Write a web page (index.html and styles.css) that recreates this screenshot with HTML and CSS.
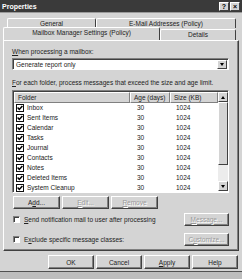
FILE: index.html
```html
<!DOCTYPE html>
<html>
<head>
    <meta charset="UTF-8">
    <title>Properties</title>
    <link rel="stylesheet" href="styles.css">
</head>
<body>
    <div class="window">
        <div class="titlebar">
            <span class="title">Properties</span>
            <span class="caption-btns">
                <span class="cap-btn">?</span>
                <span class="cap-btn">&#215;</span>
            </span>
        </div>
        <div class="client">
            <div class="tabs">
                <div class="tab-row back">
                    <div class="tab t-general">General</div>
                    <div class="tab t-email">E-Mail Addresses (Policy)</div>
                </div>
                <div class="tab-row front">
                    <div class="tab t-mailbox active">Mailbox Manager Settings (Policy)</div>
                    <div class="tab t-details">Details</div>
                </div>
            </div>
            <div class="panel">
                <div class="label"><u>W</u>hen processing a mailbox:</div>
                <div class="select">
                    <span>Generate report only</span>
                    <span class="drop-btn"><span class="arrow-down"></span></span>
                </div>
                <div class="label gap"><u>F</u>or each folder, process messages that exceed the size and age limit.</div>
                <div class="listview">
                    <div class="list-main">
                        <div class="list-head">
                            <div class="col c1">Folder</div>
                            <div class="col c2">Age (days)</div>
                            <div class="col c3">Size (KB)</div>
                        </div>
                        <div class="list-body" id="listBody"></div>
                    </div>
                    <div class="scrollbar">
                        <div class="sb-btn"><span class="arrow-up"></span></div>
                        <div class="sb-thumb"></div>
                        <div class="sb-track"></div>
                        <div class="sb-btn"><span class="arrow-down"></span></div>
                    </div>
                </div>
                <div class="btn-row">
                    <button class="btn">A<u>d</u>d...</button>
                    <button class="btn disabled"><u>E</u>dit...</button>
                    <button class="btn disabled"><u>R</u>emove</button>
                </div>
                <div class="opt-row first">
                    <span class="check"></span>
                    <span class="opt-text"><u>S</u>end notification mail to user after processing</span>
                    <button class="btn side disabled"><u>M</u>essage...</button>
                </div>
                <div class="opt-row">
                    <span class="check"></span>
                    <span class="opt-text">E<u>x</u>clude specific message classes:</span>
                    <button class="btn side disabled">C<u>u</u>stomize...</button>
                </div>
            </div>
            <div class="footer">
                <button class="btn foot">OK</button>
                <button class="btn foot">Cancel</button>
                <button class="btn foot"><u>A</u>pply</button>
                <button class="btn foot">Help</button>
            </div>
        </div>
    </div>
    <div class="below"></div>

    <script>
        const folders = ['Inbox', 'Sent Items', 'Calendar', 'Tasks', 'Journal',
            'Contacts', 'Notes', 'Deleted Items', 'System Cleanup'];

        const body = document.getElementById('listBody');
        folders.forEach(name => {
            const row = document.createElement('div');
            row.className = 'list-row';
            row.innerHTML = `
                <div class="col c1"><span class="lv-check"><svg width="6" height="6" viewBox="0 0 6 6"><path d="M0.6 2.6 L2.3 4.4 L5.4 1" fill="none" stroke="#000" stroke-width="1.5"/></svg></span>${name}</div>
                <div class="col c2">30</div>
                <div class="col c3">1024</div>
            `;
            body.appendChild(row);
        });
    </script>
</body>
</html>
```

FILE: styles.css
```css
body {
    margin: 0;
    padding: 0;
    width: 242px;
    height: 279px;
    overflow: hidden;
    background-color: #c8c8c8;
    font-family: "Liberation Sans", Arial, sans-serif;
    font-size: 6.5px;
    color: #222;
}
u {
    text-decoration: underline;
}
.window {
    height: 272px;
    background-color: #d4d4d4;
    box-sizing: border-box;
    border-bottom: 1px solid #505050;
    display: flex;
    flex-direction: column;
}
.titlebar {
    height: 12px;
    background-color: #3a3a3a;
    display: flex;
    align-items: center;
    justify-content: space-between;
    padding: 0 2px;
    border-bottom: 1px solid #9a9a9a;
}
.title {
    color: #fff;
    font-weight: bold;
    font-size: 7px;
}
.caption-btns {
    display: flex;
    gap: 1px;
}
.cap-btn {
    background-color: #d4d4d4;
    border: 1px solid;
    border-color: #fff #404040 #404040 #fff;
    box-sizing: border-box;
    width: 10px;
    height: 9px;
    font-size: 7px;
    font-weight: bold;
    line-height: 7px;
    text-align: center;
    color: #000;
}
.client {
    flex: 1;
    padding: 5px 3px 0 3px;
    display: flex;
    flex-direction: column;
}
.tabs {
    display: flex;
    flex-direction: column;
}
.tab-row {
    display: flex;
}
.tab-row.back {
    height: 10px;
    padding-left: 4px;
}
.tab-row.front {
    height: 12px;
}
.tab {
    box-sizing: border-box;
    border: 1px solid;
    border-color: #fff #404040 transparent #fff;
    border-bottom: none;
    border-radius: 2px 2px 0 0;
    text-align: center;
    line-height: 10px;
    background-color: #d4d4d4;
}
.t-general {
    width: 89px;
}
.t-email {
    width: 140px;
}
.t-mailbox {
    width: 157px;
    margin-top: -1px;
    height: 13px;
    position: relative;
    z-index: 1;
    line-height: 10px;
}
.t-details {
    width: 76px;
    margin-top: 1px;
    line-height: 9px;
}
.panel {
    height: 211px;
    box-sizing: border-box;
    border: 1px solid;
    border-color: #fff #404040 #404040 #fff;
    box-shadow: inset -1px -1px #808080;
    padding: 6px 9px 0 8px;
    display: flex;
    flex-direction: column;
}
.label {
    height: 10px;
    line-height: 10px;
    white-space: nowrap;
}
.label.gap {
    margin-top: 8px;
}
.select {
    margin-top: 1px;
    height: 12px;
    box-sizing: border-box;
    background-color: #fff;
    border: 1px solid;
    border-color: #808080 #fff #fff #808080;
    box-shadow: inset 1px 1px #404040;
    display: flex;
    align-items: center;
    justify-content: space-between;
    padding: 0 1px 0 3px;
}
.drop-btn, .sb-btn {
    width: 10px;
    height: 9px;
    box-sizing: border-box;
    background-color: #d4d4d4;
    border: 1px solid;
    border-color: #fff #404040 #404040 #fff;
    display: flex;
    align-items: center;
    justify-content: center;
}
.arrow-down {
    border-left: 2.5px solid transparent;
    border-right: 2.5px solid transparent;
    border-top: 3px solid #000;
}
.arrow-up {
    border-left: 2.5px solid transparent;
    border-right: 2.5px solid transparent;
    border-bottom: 3px solid #000;
}
.listview {
    margin-top: 2px;
    height: 103px;
    box-sizing: border-box;
    background-color: #fff;
    border: 1px solid;
    border-color: #808080 #fff #fff #808080;
    box-shadow: inset 1px 1px #404040;
    padding: 1px 0 0 1px;
    display: flex;
}
.list-main {
    flex: 1;
    overflow: hidden;
}
.list-head {
    display: flex;
    height: 11px;
}
.list-head .col {
    box-sizing: border-box;
    background-color: #d4d4d4;
    border: 1px solid;
    border-color: #fff #808080 #808080 #fff;
    line-height: 9px;
}
.col {
    padding-left: 3px;
    white-space: nowrap;
}
.c1 {
    width: 116px;
    display: flex;
    align-items: center;
}
.c2 {
    width: 40px;
}
.c3 {
    flex: 1;
}
.list-row {
    display: flex;
    height: 10px;
    line-height: 10px;
}
.list-row .c2, .list-row .c3 {
    padding-left: 7px;
    box-sizing: border-box;
}
.list-row .c1 {
    box-sizing: border-box;
    padding-left: 2px;
}
.list-row .c3 {
    padding-left: 6px;
}
.lv-check {
    width: 8px;
    height: 8px;
    box-sizing: border-box;
    border: 1px solid #111;
    margin-right: 3px;
    display: flex;
    align-items: center;
    justify-content: center;
}
.lv-check svg {
    display: block;
}
.scrollbar {
    width: 10px;
    display: flex;
    flex-direction: column;
    background-color: #ececec;
    margin-bottom: 1px;
}
.sb-btn {
    height: 10px;
}
.sb-thumb {
    height: 63px;
    background-color: #d4d4d4;
    border: 1px solid;
    border-color: #fff #404040 #404040 #fff;
    box-sizing: border-box;
}
.sb-track {
    flex: 1;
}
.btn {
    font-family: inherit;
    font-size: inherit;
    color: #222;
    padding: 0;
    background-color: #d4d4d4;
    box-sizing: border-box;
    border: 1px solid;
    border-color: #fff #404040 #404040 #fff;
    box-shadow: inset -1px -1px #808080;
}
.btn.disabled {
    color: #9a9a9a;
    text-shadow: 1px 1px #fff;
}
.btn-row {
    display: flex;
    gap: 2px;
    margin-top: 3px;
    padding-left: 1px;
}
.btn-row .btn {
    width: 47px;
    height: 13px;
}
.opt-row {
    display: flex;
    align-items: center;
    height: 13px;
    margin-top: 7px;
    padding-left: 1px;
}
.opt-row.first {
    margin-top: 4px;
}
.check {
    width: 7px;
    height: 7px;
    box-sizing: border-box;
    background-color: #fff;
    border: 1px solid;
    border-color: #808080 #fff #fff #808080;
    box-shadow: inset 1px 1px #404040;
    margin-right: 4px;
}
.opt-text {
    flex: 1;
    white-space: nowrap;
}
.btn.side {
    width: 45px;
    height: 13px;
}
.footer {
    display: flex;
    justify-content: flex-end;
    gap: 2px;
    margin-top: 4px;
    padding-right: 1px;
}
.btn.foot {
    width: 46px;
    height: 14px;
}
.below {
    height: 7px;
    background-color: #bdbdbd;
}
```
